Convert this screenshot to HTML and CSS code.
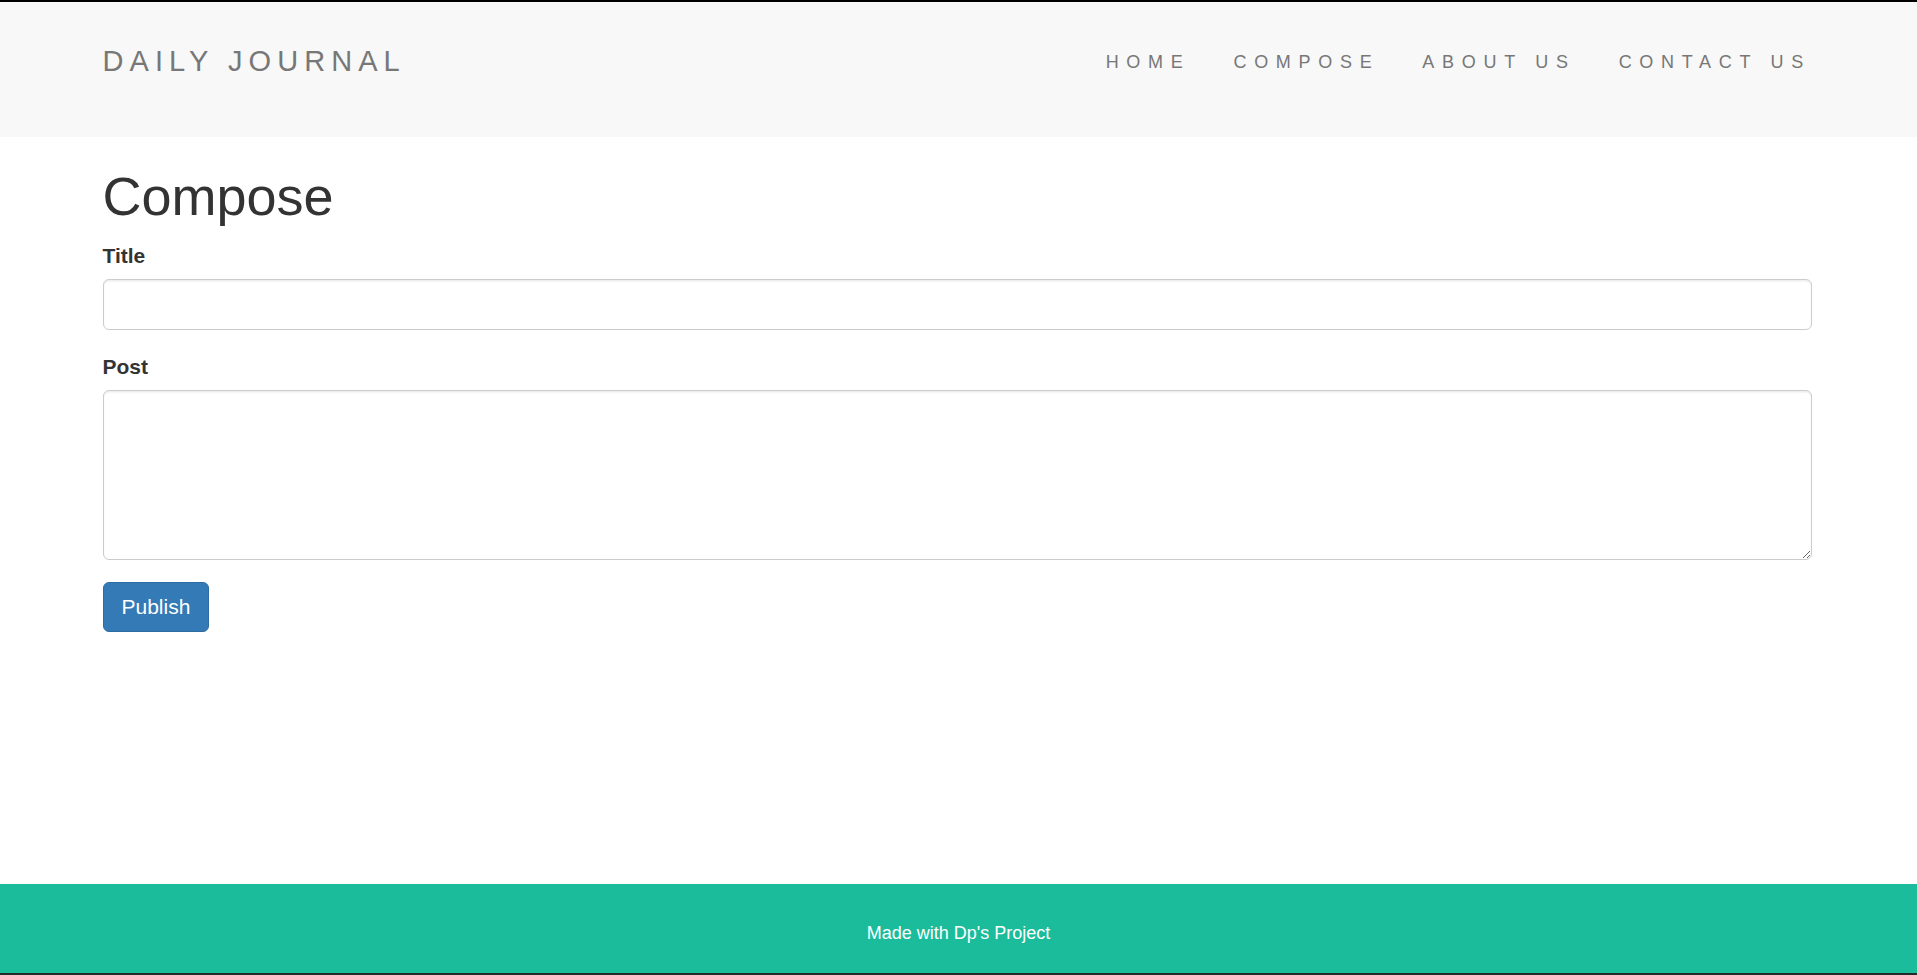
FILE: index.html
```html
<!DOCTYPE html>
<html lang="en">
<head>
    <meta charset="UTF-8">
    <meta name="viewport" content="width=device-width, initial-scale=1.0">
    <title>Daily Journal</title>
    <link rel="stylesheet" href="styles.css">
</head>
<body>

<nav class="navbar">
    <div class="container nav-inner">
        <a class="brand" href="#">DAILY JOURNAL</a>
        <ul class="nav-links">
            <li><a href="#">HOME</a></li>
            <li><a href="#">COMPOSE</a></li>
            <li><a href="#">ABOUT US</a></li>
            <li><a href="#">CONTACT US</a></li>
        </ul>
    </div>
</nav>

<main class="container">
    <h1>Compose</h1>
    <form action="#" method="post">
        <div class="form-group">
            <label for="postTitle">Title</label>
            <input type="text" id="postTitle" name="postTitle" class="form-control">
        </div>
        <div class="form-group">
            <label for="postBody">Post</label>
            <textarea id="postBody" name="postBody" class="form-control" rows="5"></textarea>
        </div>
        <button type="submit" class="btn-publish">Publish</button>
    </form>
</main>

<footer class="footer">
    <p>Made with Dp's Project</p>
</footer>

</body>
</html>
```

FILE: styles.css
```css
* { box-sizing: border-box; }
html, body { margin: 0; padding: 0; }
body { font-family: "Liberation Sans", Arial, sans-serif; color: #333; background: #fff; min-height: 100vh; display: flex; flex-direction: column; border-top: 2px solid #000; }
a { text-decoration: none; }

.container { width: 1755px; margin: 0 auto; padding: 0 24px 0 21.5px; }

/* header */
.navbar { background-color: #f8f8f8; height: 135px; padding-top: 21px; flex-shrink: 0; }
.nav-inner { display: flex; justify-content: space-between; align-items: center; height: 75px; }
.brand { margin-left: -21.5px; padding: 22.5px 21.5px; font-size: 29px; line-height: 30px; letter-spacing: 6.05px; color: #777; }
.nav-links { list-style: none; margin: 0 -20.5px 0 0; padding: 0; display: flex; }
.nav-links a { display: block; padding: 23.5px 21.5px 21.5px; font-size: 18px; line-height: 30px; letter-spacing: 7.7px; color: #777; }

/* compose form */
h1 { font-size: 54px; font-weight: 500; line-height: 1.1; margin: 30px 0 15px; color: #333; }
.form-group { margin-bottom: 22.5px; }
label { display: inline-block; margin-bottom: 7.5px; font-size: 21px; font-weight: bold; line-height: 30px; }
.form-control { display: block; width: 100%; padding: 9px 18px; font-family: inherit; font-size: 21px; line-height: 30px; color: #555; background: #fff; border: 1px solid #ccc; border-radius: 6px; box-shadow: inset 0 1.5px 1.5px rgba(0,0,0,.075); }
input.form-control { height: 51px; }
textarea.form-control { height: 170px; resize: vertical; }
.btn-publish { padding: 9px 18px; font-family: inherit; font-size: 21px; line-height: 30px; color: #fff; background-color: #337ab7; border: 1.5px solid #2e6da4; border-radius: 6px; cursor: pointer; }

/* footer */
.footer { margin-top: auto; background-color: #1abc9c; padding: 36px 0 26px; text-align: center; border-bottom: 2px solid #232a28; }
.footer p { margin: 0; font-size: 18px; line-height: 27px; color: #fff; }
```
